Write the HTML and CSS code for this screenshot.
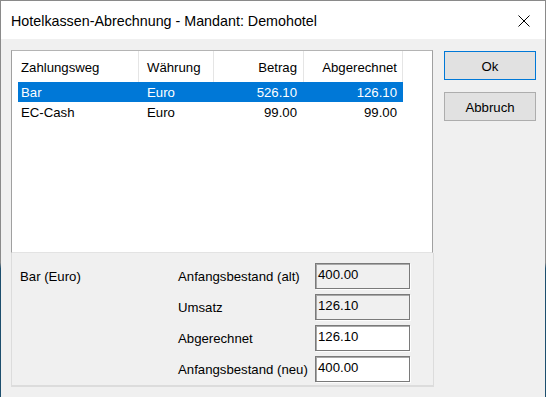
FILE: index.html
```html
<!DOCTYPE html>
<html>
<head>
<meta charset="utf-8">
<link rel="stylesheet" href="styles.css">
</head>
<body>
<div class="window">
  <div class="titlebar">
    <span class="title">Hotelkassen-Abrechnung - Mandant: Demohotel</span>
    <svg class="close" width="12" height="12" viewBox="0 0 12 12"><path d="M0.5 0.5 L11.5 11.5 M11.5 0.5 L0.5 11.5" stroke="#000" stroke-width="1" fill="none"/></svg>
  </div>
  <div class="body">
    <div class="frame">
      <div class="list">
        <div class="header">
          <div class="hcell c1">Zahlungsweg</div>
          <div class="hcell c2">Währung</div>
          <div class="hcell c3 right">Betrag</div>
          <div class="hcell c4 right">Abgerechnet</div>
        </div>
        <div class="row selected">
          <div class="cell r1">Bar</div>
          <div class="cell c2">Euro</div>
          <div class="cell c3 right">526.10</div>
          <div class="cell c4 right">126.10</div>
        </div>
        <div class="row">
          <div class="cell r1">EC-Cash</div>
          <div class="cell c2">Euro</div>
          <div class="cell c3 right">99.00</div>
          <div class="cell c4 right">99.00</div>
        </div>
      </div>
      <div class="panel">
        <div class="caption">Bar (Euro)</div>
        <div class="label">Anfangsbestand (alt)</div>
        <div class="field readonly">400.00</div>
        <div class="label l2">Umsatz</div>
        <div class="field readonly">126.10</div>
        <div class="label l2">Abgerechnet</div>
        <div class="field">126.10</div>
        <div class="label l2">Anfangsbestand (neu)</div>
        <div class="field">400.00</div>
      </div>
    </div>
    <div class="buttons">
      <div class="btn default">Ok</div>
      <div class="btn">Abbruch</div>
    </div>
  </div>
</div>
</body>
</html>
```
FILE: styles.css
```css
* { box-sizing: border-box; }
html, body { margin: 0; padding: 0; }
body {
  width: 546px;
  height: 397px;
  overflow: hidden;
  font-family: "Liberation Sans", Arial, sans-serif;
  font-size: 13.2px;
  color: #000;
  background: #f0f0f0;
}
.window {
  width: 546px;
  height: 397px;
  border: 1px solid transparent;
  border-bottom: none;
  border-image: linear-gradient(to bottom, #8a8a8a 0, #8a8a8a 262px, #1d4f6e 268px, #1d4f6e 100%) 1;
  background: #f0f0f0;
  display: flex;
  flex-direction: column;
}
.titlebar {
  height: 38px;
  background: #fff;
  display: flex;
  align-items: center;
  justify-content: space-between;
  padding: 0 15px 0 10px;
  flex: none;
}
.title {
  font-size: 14.3px;
  color: #000;
  margin-top: 1px;
}
.close { display: block; margin-top: 1px; }
.body {
  display: flex;
  padding: 11px 0 0 10px;
  gap: 10px;
}
.frame {
  width: 423px;
  display: flex;
  flex-direction: column;
}
.list {
  height: 203px;
  background: #fff;
  border: 1px solid;
  border-color: #b4b4b4 #a0a0a0 #e3e3e3 #a0a0a0;
  width: 422px;
}
.header {
  display: flex;
  height: 31px;
}
.hcell {
  border-right: 1px solid #e5e5e5;
  display: flex;
  align-items: center;
  padding-top: 1px;
}
.header .c1 { width: 127px; padding-left: 9px; }
.c2 { width: 75px; padding-left: 8px; }
.c3 { width: 90px; }
.c4 { width: 99px; }
.hcell.right, .cell.right { justify-content: flex-end; }
.header .c3 { padding-right: 6px; }
.header .c4 { padding-right: 5px; }
.row {
  display: flex;
  height: 20px;
  margin-left: 6px;
  width: 385px;
}
.row.selected { background: #0078d7; color: #fff; }
.cell {
  display: flex;
  align-items: center;
  padding-top: 1px;
  white-space: nowrap;
}
.cell.r1 { width: 121px; padding-left: 3px; }
.row .c3 { padding-right: 7px; }
.row .c4 { padding-right: 6px; }
.panel {
  height: 134px;
  width: 423px;
  border: 1px solid #dcdcdc;
  border-top: none;
  border-bottom-width: 2px;
  display: grid;
  grid-template-columns: 158px 137px 95px;
  grid-auto-rows: 26px;
  row-gap: 5px;
  padding: 10px 0 0 8px;
  align-items: center;
}
.caption { grid-column: 1; grid-row: 1; }
.label { grid-column: 2; }
.field {
  grid-column: 3;
  height: 26px;
  border: 1px solid #7a7a7a;
  box-shadow: inset 1px 1px 0 #a8a8a8, 1px 1px 0 #fdfdfd;
  background: #fff;
  padding-left: 2px;
  line-height: 22px;
}
.field.readonly { background: #f0f0f0; }
.buttons {
  display: flex;
  flex-direction: column;
  gap: 12px;
  width: 92px;
}
.btn {
  height: 29px;
  width: 92px;
  border: 1px solid #adadad;
  background: #e1e1e1;
  display: flex;
  align-items: center;
  justify-content: center;
  padding-top: 1px;
}
.btn.default { border-color: #0078d7; margin-top: 1px; }
```
